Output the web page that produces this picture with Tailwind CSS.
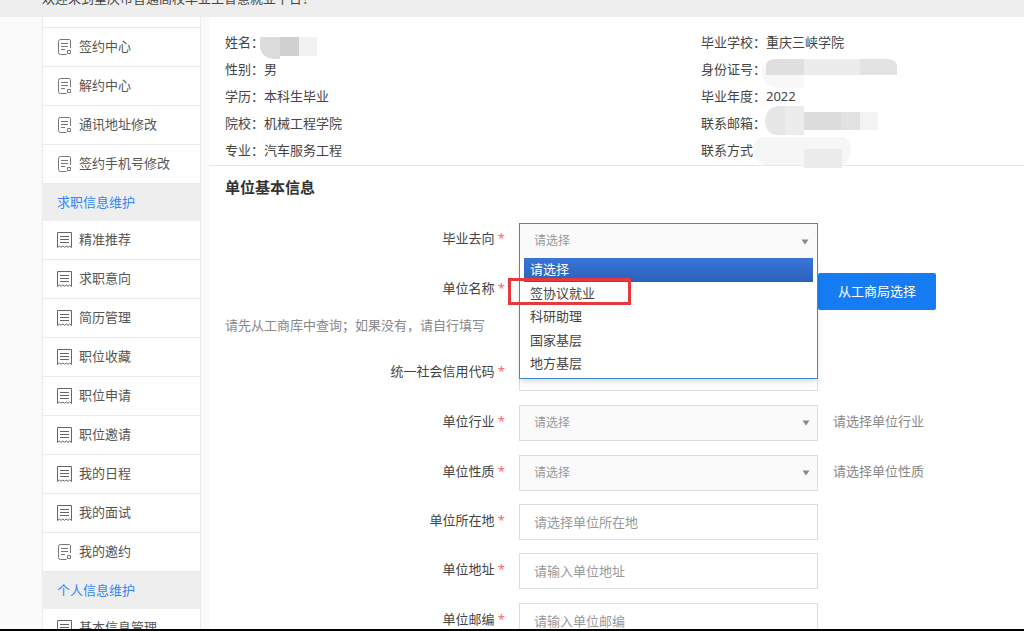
<!DOCTYPE html>
<html lang="zh-CN">

<head>
  <meta charset="UTF-8" />
  <meta name="viewport" content="width=device-width, initial-scale=1.0" />
  <script src="https://cdn.jsdelivr.net/npm/@tailwindcss/browser@4"></script>
  <title>重庆市普通高校毕业生智慧就业平台</title>
</head>

<body class="h-screen overflow-hidden flex flex-col bg-[#fafafa] border-b-2 border-black font-['Noto_Sans','Noto_Sans_CJK_SC',sans-serif] text-[13px] text-[#444]">
  <!-- Icons -->
  <svg class="hidden">
    <symbol id="icon-doc" viewBox="0 0 16 16">
      <path d="M9.5 15.5H3.5A2 2 0 0 1 1.5 13.5V2.5A2 2 0 0 1 3.5 .5H12.5A1.2 1.2 0 0 1 13.5 1.7V9M4 4.5H11M4 7.5H11M4 10.5H8M10.5 11.5H13.5V14.5H10.5Z" fill="none" stroke="currentColor" />
    </symbol>
    <symbol id="icon-bill" viewBox="0 0 16 16">
      <path d="M.5 15.5V.5H14.5V15.5M.5 15.5L2.5 14L4 15.3L5.8 14L7.5 15.3L9.2 14L11 15.3L12.5 14L14.5 15.5" fill="none" stroke="currentColor" />
      <path d="M3 4.5H12M3 7.5H12M3 10.5H12" fill="none" stroke="currentColor" />
    </symbol>
    <symbol id="icon-arrow" viewBox="0 0 8 6">
      <path d="M.5 .5H7.5L4 5.5Z" fill="currentColor" />
    </symbol>
  </svg>

  <!-- Header -->
  <header class="h-[17px] shrink-0 overflow-hidden bg-[#eee] flex items-end pl-[42px] pb-[10px]">
    <p class="leading-[18px]">欢迎来到重庆市普通高校毕业生智慧就业平台！</p>
  </header>

  <div class="flex-1 min-h-0 overflow-hidden flex items-stretch">
    <!-- Sidebar -->
    <nav class="w-[159px] shrink-0 ml-[42px] mr-2 bg-white border-x border-[#ebebeb] text-[#555]">
      <div class="h-[11px] border-b border-[#ebebeb]"></div>
      <a href="#" class="flex items-center gap-1.5 h-[39px] pl-[14px] border-b border-[#ebebeb]"><svg class="size-4 text-[#777]"><use href="#icon-doc" /></svg>签约中心</a>
      <a href="#" class="flex items-center gap-1.5 h-[39px] pl-[14px] border-b border-[#ebebeb]"><svg class="size-4 text-[#777]"><use href="#icon-doc" /></svg>解约中心</a>
      <a href="#" class="flex items-center gap-1.5 h-[39px] pl-[14px] border-b border-[#ebebeb]"><svg class="size-4 text-[#777]"><use href="#icon-doc" /></svg>通讯地址修改</a>
      <a href="#" class="flex items-center gap-1.5 h-[39px] pl-[14px] border-b border-[#ebebeb]"><svg class="size-4 text-[#777]"><use href="#icon-doc" /></svg>签约手机号修改</a>
      <h3 class="flex items-center h-[37px] pl-[14px] bg-[#eee] text-[#3385ff]">求职信息维护</h3>
      <a href="#" class="flex items-center gap-1.5 h-[39px] pl-[14px] border-b border-[#ebebeb]"><svg class="size-4 text-[#666]"><use href="#icon-bill" /></svg>精准推荐</a>
      <a href="#" class="flex items-center gap-1.5 h-[39px] pl-[14px] border-b border-[#ebebeb]"><svg class="size-4 text-[#666]"><use href="#icon-bill" /></svg>求职意向</a>
      <a href="#" class="flex items-center gap-1.5 h-[39px] pl-[14px] border-b border-[#ebebeb]"><svg class="size-4 text-[#666]"><use href="#icon-bill" /></svg>简历管理</a>
      <a href="#" class="flex items-center gap-1.5 h-[39px] pl-[14px] border-b border-[#ebebeb]"><svg class="size-4 text-[#666]"><use href="#icon-bill" /></svg>职位收藏</a>
      <a href="#" class="flex items-center gap-1.5 h-[39px] pl-[14px] border-b border-[#ebebeb]"><svg class="size-4 text-[#666]"><use href="#icon-bill" /></svg>职位申请</a>
      <a href="#" class="flex items-center gap-1.5 h-[39px] pl-[14px] border-b border-[#ebebeb]"><svg class="size-4 text-[#666]"><use href="#icon-bill" /></svg>职位邀请</a>
      <a href="#" class="flex items-center gap-1.5 h-[39px] pl-[14px] border-b border-[#ebebeb]"><svg class="size-4 text-[#666]"><use href="#icon-bill" /></svg>我的日程</a>
      <a href="#" class="flex items-center gap-1.5 h-[39px] pl-[14px] border-b border-[#ebebeb]"><svg class="size-4 text-[#666]"><use href="#icon-bill" /></svg>我的面试</a>
      <a href="#" class="flex items-center gap-1.5 h-[39px] pl-[14px] border-b border-[#ebebeb]"><svg class="size-4 text-[#777]"><use href="#icon-doc" /></svg>我的邀约</a>
      <h3 class="flex items-center h-[37px] pl-[14px] bg-[#eee] text-[#3385ff]">个人信息维护</h3>
      <a href="#" class="flex items-center gap-1.5 h-[39px] pl-[14px] border-b border-[#ebebeb]"><svg class="size-4 text-[#666]"><use href="#icon-bill" /></svg>基本信息管理</a>
    </nav>

    <!-- Main -->
    <main class="flex-1 min-w-0 bg-white">
      <!-- Student info -->
      <section class="flex pt-3 pb-px pl-4 border-b border-[#e8e8e8] leading-[27px]">
        <div class="relative w-[476px] shrink-0">
          <p>姓名：</p>
          <p>性别：男</p>
          <p>学历：本科生毕业</p>
          <p>院校：机械工程学院</p>
          <p>专业：汽车服务工程</p>
          <svg class="absolute left-[34px] top-2 w-[58px] h-[22px]" viewBox="0 0 58 22">
            <path d="M1 0H21V22H14Q1 20 1 8Z" fill="#dcdcdc" />
            <path d="M21 0H40V19H21Z" fill="#d0d0d0" />
            <path d="M40 0H58V19H40Z" fill="#f2f2f3" />
          </svg>
        </div>
        <div class="relative flex-1">
          <p>毕业学校：重庆三峡学院</p>
          <p>身份证号：</p>
          <p>毕业年度：2022</p>
          <p>联系邮箱：</p>
          <p>联系方式：</p>
          <svg class="absolute left-[51px] top-[29px] w-[148px] h-[110px]" viewBox="0 0 148 110">
            <path d="M10 10H52V30H25Q10 28 10 14Z" fill="#f8f8f8" />
            <path d="M14 17V8Q14 1 24 1H52V17Z" fill="#dfdfdf" />
            <path d="M52 1H108V17H52Z" fill="#ececec" />
            <path d="M108 1H136Q145 2 145 8V17H108Z" fill="#e3e3e3" />
            <path d="M27 48H52V77H26Q14 77 13 63Q14 49 27 48Z" fill="#e6e6e6" />
            <path d="M33 48H52V77H33Z" fill="#ececec" />
            <path d="M52 54H89V72H52Z" fill="#dcdcdc" />
            <path d="M89 54H108V72H89Z" fill="#e2e2e2" />
            <path d="M108 54H126V72H108Z" fill="#f3f3f3" />
            <path d="M10 79H92Q100 84 99 94Q97 104 90 107H12Q1 101 1 92Q2 82 10 79Z" fill="#f6f6f6" />
            <path d="M52 91H90V110H52Z" fill="#ebebeb" />
          </svg>
        </div>
      </section>

      <!-- Company form -->
      <form class="pl-4">
        <h2 class="pt-[10px] mb-[25px] leading-[22px] text-[15px] font-bold text-[#333]">单位基本信息</h2>

        <div class="flex mb-[14px] h-9">
          <label for="direction" class="w-[280px] shrink-0 mr-[14px] leading-[30px] text-right">毕业去向 <span class="text-[#f56c6c]">*</span></label>
          <div class="relative w-[299px] shrink-0 bg-[#fafafa] border border-[#3f87d0]">
            <select id="direction" class="appearance-none w-full h-[34px] px-[14px] text-xs text-[#999] outline-none">
              <option>请选择</option>
              <option>签协议就业</option>
              <option>科研助理</option>
              <option>国家基层</option>
              <option>地方基层</option>
            </select>
            <svg class="absolute right-2 top-[15px] w-2 h-1.5 text-[#888]"><use href="#icon-arrow" /></svg>
            <ul id="directionList" class="absolute z-10 -left-px -right-px top-[34px] h-[121px] flex flex-col px-1 pb-0.5 bg-white border border-t-0 border-[#3f87d0] shadow-md">
              <li class="flex-1 flex"><button type="button" class="w-full px-1.5 text-left text-white bg-linear-to-b from-[#3875d7] to-[#2a62bc]">请选择</button></li>
              <li class="relative flex-1 flex">
                <button type="button" class="w-full px-1.5 text-left">签协议就业</button>
                <span class="absolute -left-4 -top-1 w-[123px] h-[27px] border-3 border-[#e8383d] pointer-events-none"></span>
              </li>
              <li class="flex-1 flex"><button type="button" class="w-full px-1.5 text-left">科研助理</button></li>
              <li class="flex-1 flex"><button type="button" class="w-full px-1.5 text-left">国家基层</button></li>
              <li class="flex-1 flex"><button type="button" class="w-full px-1.5 text-left">地方基层</button></li>
            </ul>
          </div>
        </div>

        <div class="flex mb-1.5 h-9">
          <label for="company" class="w-[280px] shrink-0 mr-[14px] leading-[30px] text-right">单位名称 <span class="text-[#f56c6c]">*</span></label>
          <input id="company" type="text" class="w-[299px] shrink-0 h-9 px-[14px] border border-[#ddd] outline-none" />
          <button type="button" class="w-[118px] h-[37px] rounded-xs bg-[#167cf3] hover:bg-[#0f6fe0] text-white">从工商局选择</button>
        </div>
        <p class="mb-5 leading-5 text-[#888]">请先从工商库中查询；如果没有，请自行填写</p>

        <div class="flex mb-[14px] h-9">
          <label for="code" class="w-[280px] shrink-0 mr-[14px] leading-8 text-right">统一社会信用代码 <span class="text-[#f56c6c]">*</span></label>
          <input id="code" type="text" class="w-[299px] shrink-0 h-9 px-[14px] border border-[#ddd] outline-none" />
        </div>

        <div class="flex mb-[14px] h-9">
          <label for="industry" class="w-[280px] shrink-0 mr-[14px] leading-8 text-right">单位行业 <span class="text-[#f56c6c]">*</span></label>
          <div class="relative w-[299px] shrink-0">
            <select id="industry" class="appearance-none w-full h-9 px-[14px] bg-[#fafafa] border border-[#ddd] text-xs text-[#999] outline-none">
              <option>请选择</option>
            </select>
            <svg class="absolute right-2 top-[15px] w-2 h-1.5 text-[#888]"><use href="#icon-arrow" /></svg>
          </div>
          <span class="ml-[15px] leading-8 text-[#888]">请选择单位行业</span>
        </div>

        <div class="flex mb-[13px] h-9">
          <label for="nature" class="w-[280px] shrink-0 mr-[14px] leading-8 text-right">单位性质 <span class="text-[#f56c6c]">*</span></label>
          <div class="relative w-[299px] shrink-0">
            <select id="nature" class="appearance-none w-full h-9 px-[14px] bg-[#fafafa] border border-[#ddd] text-xs text-[#999] outline-none">
              <option>请选择</option>
            </select>
            <svg class="absolute right-2 top-[15px] w-2 h-1.5 text-[#888]"><use href="#icon-arrow" /></svg>
          </div>
          <span class="ml-[15px] leading-8 text-[#888]">请选择单位性质</span>
        </div>

        <div class="flex mb-[13px] h-9">
          <label for="area" class="w-[280px] shrink-0 mr-[14px] leading-8 text-right">单位所在地 <span class="text-[#f56c6c]">*</span></label>
          <input id="area" type="text" placeholder="请选择单位所在地" class="w-[299px] shrink-0 h-9 px-[14px] border border-[#ddd] placeholder:text-[#999] outline-none" />
        </div>

        <div class="flex mb-[14px] h-9">
          <label for="address" class="w-[280px] shrink-0 mr-[14px] leading-8 text-right">单位地址 <span class="text-[#f56c6c]">*</span></label>
          <input id="address" type="text" placeholder="请输入单位地址" class="w-[299px] shrink-0 h-9 px-[14px] border border-[#ddd] placeholder:text-[#999] outline-none" />
        </div>

        <div class="flex mb-[13px] h-9">
          <label for="zip" class="w-[280px] shrink-0 mr-[14px] leading-8 text-right">单位邮编 <span class="text-[#f56c6c]">*</span></label>
          <input id="zip" type="text" placeholder="请输入单位邮编" class="w-[299px] shrink-0 h-9 px-[14px] border border-[#ddd] placeholder:text-[#999] outline-none" />
        </div>
      </form>
    </main>
  </div>

  <script>
    const direction = document.getElementById('direction');
    const list = document.getElementById('directionList');

    list.querySelectorAll('button').forEach((btn, i) => {
      btn.onclick = () => {
        direction.selectedIndex = i;
        list.style.display = 'none';
      };
    });
  </script>
</body>

</html>
